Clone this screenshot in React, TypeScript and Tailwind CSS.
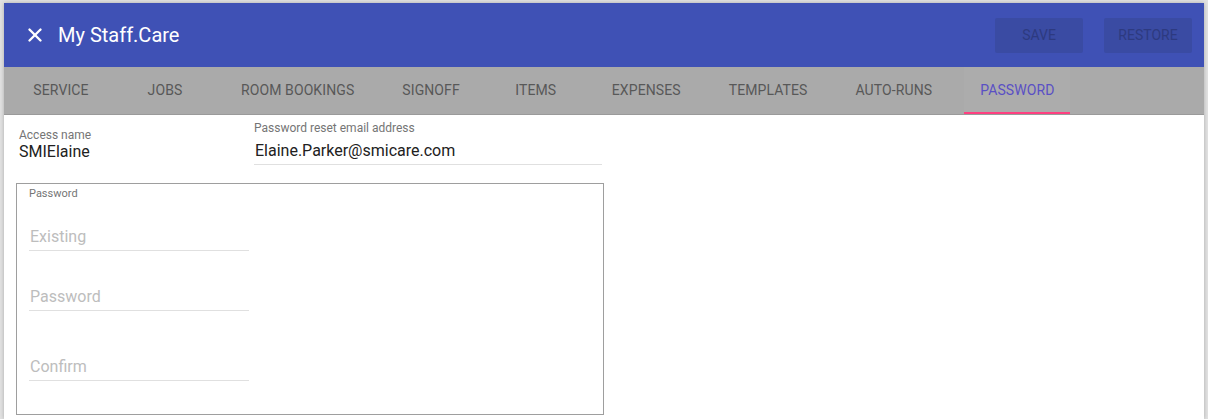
import { X } from 'lucide-react';

const TABS = [
  'Service',
  'Jobs',
  'Room bookings',
  'Signoff',
  'Items',
  'Expenses',
  'Templates',
  'Auto-runs',
  'Password',
];

const ACTIVE = 'Password';

function PasswordInput({ placeholder }: { placeholder: string }) {
  return (
    <div className="w-[220px] border-b border-[#e0e0e0] pb-[3px]">
      <input
        type="password"
        placeholder={placeholder}
        className="block h-[20px] w-full bg-transparent pl-px text-[16px] leading-[20px] text-[#212121] outline-none placeholder:text-[#bdbdbd]"
      />
    </div>
  );
}

export default function App() {
  return (
    <div className="h-[419px] w-[1208px] overflow-hidden bg-[#e2e2e2] px-[4px] pt-[3px] font-['Roboto',sans-serif]">
      <div className="h-full bg-white shadow-[0_0_4px_rgba(0,0,0,0.25)]">
        <header className="flex h-[64px] items-center bg-[#3f51b5] pl-[19px] pr-[12px]">
          <button className="flex h-[24px] w-[24px] items-center justify-center text-white">
            <X size={22} strokeWidth={2.6} />
          </button>
          <h1 className="ml-[11px] text-[20px] font-normal text-white">
            My Staff.Care
          </h1>
          <div className="ml-auto flex gap-[21px]">
            {['Save', 'Restore'].map((b) => (
              <button
                key={b}
                className="h-[35px] w-[88px] rounded-[2px] bg-[#3a4ba3] text-[14px] uppercase text-[#2d3a80]"
              >
                {b}
              </button>
            ))}
          </div>
        </header>

        <nav className="flex h-[48px] items-stretch gap-[16px] border-b border-[#9a9a9a] bg-[#aaaaaa] pl-[13px]">
          {TABS.map((t) => {
            const active = t === ACTIVE;
            return (
              <div
                key={t}
                className={
                  active
                    ? 'relative flex min-w-[88px] items-center justify-center bg-[#acacac] px-[16px] text-[14px] uppercase tracking-[0.1px] text-[#5a50c4]'
                    : 'relative flex min-w-[88px] items-center justify-center px-[16px] text-[14px] uppercase tracking-[0.1px] text-[#585858]'
                }
              >
                {t}
                {active ? (
                  <span className="absolute inset-x-0 bottom-0 h-[2px] bg-[#ff4081]" />
                ) : null}
              </div>
            );
          })}
        </nav>

        <section className="px-[12px]">
          <div className="flex">
            <div className="w-[238px] pl-[3px] pt-[13px]">
              <div className="text-[12px] leading-[14px] text-[#757575]">
                Access name
              </div>
              <div className="text-[16px] leading-[20px] text-[#212121]">
                SMIElaine
              </div>
            </div>
            <div className="w-[348px] pt-[6px]">
              <div className="text-[12px] leading-[14px] text-[#757575]">
                Password reset email address
              </div>
              <div className="mt-[6px] border-b border-[#e0e0e0] pb-[3px] pl-px text-[16px] leading-[20px] text-[#212121]">
                Elaine.Parker@smicare.com
              </div>
            </div>
          </div>

          <fieldset className="mt-[18px] h-[232px] w-[588px] border border-[#9e9e9e] px-[12px] pt-[3px]">
            <div className="text-[11px] leading-[14px] text-[#757575]">
              Password
            </div>
            <div className="mt-[26px] flex flex-col">
              <PasswordInput placeholder="Existing" />
              <div className="mt-[36px]">
                <PasswordInput placeholder="Password" />
              </div>
              <div className="mt-[46px]">
                <PasswordInput placeholder="Confirm" />
              </div>
            </div>
          </fieldset>
        </section>
      </div>
    </div>
  );
}
